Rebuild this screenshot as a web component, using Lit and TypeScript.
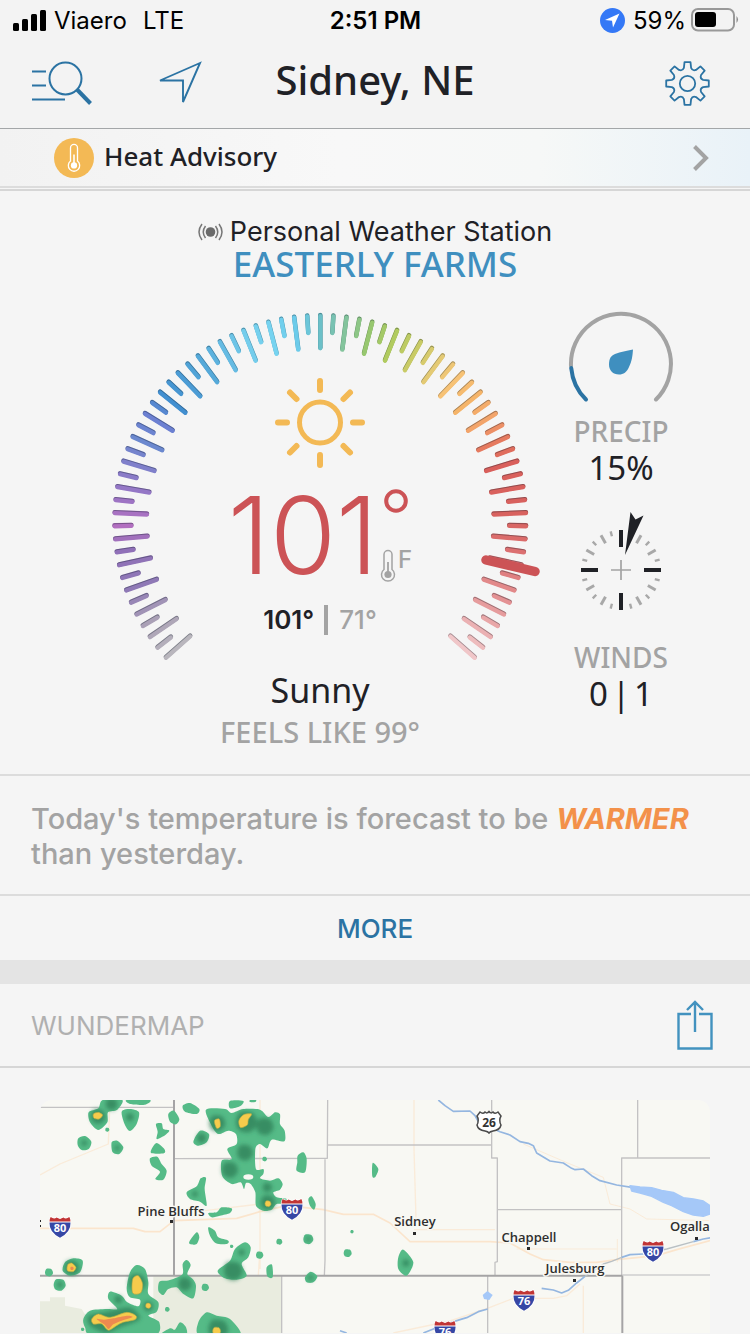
import { LitElement, html, css, svg } from "lit";
import { customElement } from "lit/decorators.js";

type Pt = [number, number];

/* ---------- dial ---------- */

const DIAL_STOPS: [number, string][] = [
  [-36, "#b9b6bd"], [-33, "#aaa0b6"], [-30, "#8f79b6"], [-27, "#9070b8"], [-25, "#b26fc0"],
  [-22, "#9477c6"], [-18, "#6b88cf"], [-16, "#6c80d2"], [-14, "#428fd0"], [-10, "#55a9d9"],
  [-6, "#74cdec"], [-4, "#76d3f0"], [-2, "#6ccbea"], [0, "#6cc0c8"], [2, "#83c49c"],
  [4, "#97c76f"], [6, "#b1cb5f"], [8, "#c9cb66"], [10, "#e4ca74"], [12, "#f7c275"],
  [14, "#f5b469"], [16, "#f3a46a"], [18, "#e67a5f"], [20, "#d95f5b"], [24, "#d8625f"],
  [28, "#dd7577"], [32, "#e69c9d"], [36, "#f0c6c8"],
];

const channels = (c: string) => [1, 3, 5].map((i) => parseInt(c.slice(i, i + 2), 16));

function dialColor(i: number): string {
  let k = 0;
  while (k < DIAL_STOPS.length - 2 && DIAL_STOPS[k + 1][0] < i) k++;
  const [a, ca] = DIAL_STOPS[k];
  const [b, cb] = DIAL_STOPS[k + 1];
  const t = (i - a) / (b - a);
  const x = channels(ca);
  const y = channels(cb);
  return `rgb(${x.map((v, n) => Math.round(v + (y[n] - v) * t)).join(",")})`;
}

function dialTick(i: number) {
  const a = (i * 3.65 * Math.PI) / 180;
  const outer = 205.8;
  const inner = i % 2 === 0 ? 173.5 : 189;
  const x1 = 225.3 + Math.sin(a) * outer;
  const y1 = 222.3 - Math.cos(a) * outer;
  const x2 = 225.3 + Math.sin(a) * inner;
  const y2 = 222.3 - Math.cos(a) * inner;
  const c = dialColor(i);
  return svg`
    <line x1=${x1} y1=${y1 - 0.4} x2=${x2} y2=${y2 - 0.4} stroke=${c} stroke-width="4.6" />
    <line x1=${x1} y1=${y1 - 0.4} x2=${x2} y2=${y2 - 0.4} stroke="#14202c" stroke-opacity="0.36" stroke-width="4.4" />
    <line x1=${x1} y1=${y1 + 0.5} x2=${x2} y2=${y2 + 0.5} stroke=${c} stroke-width="4.2" />`;
}

/* ---------- map helpers ---------- */

function smooth(p: Pt[]): string {
  const n = p.length;
  let d = `M${p[0][0]} ${p[0][1]}`;
  for (let i = 0; i < n; i++) {
    const a = p[(i - 1 + n) % n], b = p[i], c = p[(i + 1) % n], e = p[(i + 2) % n];
    d += `C${b[0] + (c[0] - a[0]) / 7} ${b[1] + (c[1] - a[1]) / 7} ${c[0] - (e[0] - b[0]) / 7} ${c[1] - (e[1] - b[1]) / 7} ${c[0]} ${c[1]}`;
  }
  return d + "Z";
}

const dot = (x: number, y: number, r: number): Pt[] => [
  [x - r, y], [x - r * 0.6, y - r * 0.9], [x + r * 0.6, y - r * 0.8], [x + r, y + r * 0.2], [x + r * 0.3, y + r], [x - r * 0.7, y + r * 0.8],
];

const RAIN: Pt[][] = [
  [[218, 33], [277, 33], [262, 62], [234, 70], [232, 100], [205, 123], [180, 100], [176, 70], [205, 58]],
  [[290, 33], [360, 33], [345, 47], [300, 45]],
  [[275, 68], [300, 60], [327, 70], [320, 105], [300, 126], [285, 108]],
  [[145, 148], [165, 141], [184, 158], [176, 180], [155, 183], [143, 168]],
  [[245, 160], [262, 155], [280, 175], [268, 195], [248, 190]],
  [[378, 105], [395, 103], [400, 120], [418, 125], [400, 142], [380, 150], [383, 128]],
  [[365, 180], [380, 162], [403, 180], [402, 193], [365, 193]],
  [[360, 208], [382, 203], [395, 225], [410, 245], [400, 272], [376, 270], [390, 248], [365, 230]],
  [[415, 75], [432, 65], [448, 90], [438, 106], [420, 98]],
  [[458, 50], [480, 42], [508, 60], [500, 75], [465, 68]],
  [[600, 36], [640, 36], [630, 52], [600, 58]],
  [[660, 33], [678, 33], [676, 39], [660, 39]],
  [[528, 62], [585, 60], [605, 72], [640, 60], [690, 62], [715, 84], [735, 70], [750, 76], [750, 105], [764, 125], [763, 157], [725, 152], [712, 178], [690, 165], [676, 180], [678, 240], [700, 240], [700, 255], [690, 268], [720, 275], [745, 268], [758, 285], [750, 302], [730, 310], [740, 325], [770, 330], [770, 345], [740, 345], [725, 362], [700, 365], [678, 350], [676, 310], [662, 285], [648, 282], [642, 300], [632, 280], [605, 285], [577, 262], [575, 215], [605, 210], [592, 180], [620, 165], [618, 135], [595, 125], [565, 135], [545, 110]],
  [[490, 158], [510, 125], [537, 135], [530, 160], [505, 170]],
  [[470, 310], [500, 292], [512, 268], [528, 266], [524, 300], [530, 350], [510, 338], [480, 330]],
  [[535, 372], [560, 370], [575, 355], [605, 358], [600, 372], [570, 380], [545, 385]],
  [[535, 415], [555, 425], [565, 445], [595, 455], [590, 465], [558, 463], [540, 440]],
  [[478, 458], [500, 430], [508, 445], [500, 465], [482, 466]],
  [[563, 545], [600, 515], [615, 480], [645, 460], [662, 475], [655, 505], [635, 525], [650, 560], [620, 572], [585, 568]],
  [[458, 525], [470, 513], [482, 528], [472, 555], [488, 570], [498, 590], [490, 628], [460, 615], [440, 595], [415, 600], [400, 618], [385, 605], [388, 578], [410, 575], [430, 570], [458, 555]],
  [[105, 520], [130, 508], [158, 515], [150, 550], [120, 560], [98, 545]],
  [[300, 550], [320, 528], [345, 540], [355, 580], [355, 615], [385, 640], [380, 668], [355, 680], [388, 700], [370, 740], [190, 740], [165, 715], [160, 690], [180, 665], [230, 660], [262, 660], [235, 630], [240, 608], [275, 620], [292, 640], [325, 652], [330, 632], [300, 625], [290, 600]],
  [[505, 700], [530, 670], [560, 680], [600, 690], [630, 740], [510, 740]],
  [[390, 740], [420, 718], [435, 722], [450, 700], [468, 715], [465, 740]],
  [[803, 200], [820, 190], [830, 210], [825, 250], [800, 245], [802, 220]],
  [[1028, 222], [1045, 240], [1036, 264], [1027, 262]],
  [[835, 330], [845, 322], [857, 345], [852, 362], [840, 350]],
  [[710, 535], [726, 527], [728, 565], [712, 562]],
  [[825, 565], [842, 548], [862, 562], [850, 580], [830, 580]],
  [[1120, 482], [1150, 520], [1130, 560], [1105, 540], [1105, 505]],
  dot(605, 472, 5), dot(526, 595, 11), dot(57, 550, 12), dot(89, 587, 18), dot(412, 661, 7), dot(232, 122, 6),
  dot(835, 450, 15), dot(748, 458, 9), dot(966, 428, 5), dot(953, 492, 12), dot(689, 498, 11), dot(704, 210, 7), dot(158, 721, 5),
];

const HEAVY: Pt[][] = [
  dot(205, 82, 22), dot(245, 45, 18), dot(300, 84, 12), dot(163, 162, 9), dot(262, 177, 8), dot(562, 102, 24),
  dot(650, 98, 32), dot(705, 112, 26), dot(600, 242, 24), dot(645, 190, 24), dot(714, 340, 22), dot(712, 295, 14), dot(515, 147, 14), dot(495, 315, 9),
  dot(610, 545, 28), dot(635, 490, 10), dot(465, 585, 20), dot(90, 587, 9), dot(126, 536, 22), dot(322, 580, 26),
  dot(1128, 522, 11), dot(842, 566, 8), dot(835, 450, 7), dot(565, 720, 30), dot(355, 652, 15), dot(265, 632, 12),
  [[175, 680], [230, 668], [300, 655], [330, 690], [270, 715], [230, 732], [180, 710]],
];

const YELLOW: Pt[][] = [
  [[190, 75], [205, 70], [218, 78], [208, 90], [192, 88]],
  [[553, 95], [568, 90], [571, 112], [560, 118]],
  [[630, 88], [643, 76], [665, 75], [655, 92], [652, 108], [632, 116], [626, 100]],
  dot(714, 344, 9),
  [[113, 527], [125, 522], [138, 535], [130, 548], [112, 545]],
  [[308, 570], [325, 560], [338, 585], [332, 612], [308, 612]],
  [[185, 690], [205, 675], [240, 685], [290, 670], [318, 680], [315, 692], [280, 700], [260, 710], [235, 724], [215, 705], [190, 705]],
  dot(355, 650, 8), dot(560, 726, 12),
];

const SEVERE: Pt[][] = [
  [[200, 690], [222, 692], [250, 688], [290, 680], [308, 684], [275, 695], [250, 706], [236, 720], [222, 706]],
  dot(126, 538, 5),
];

function interstate(x: number, y: number, n: string) {
  return svg`
    <g transform="translate(${x} ${y})">
      <path d="M-9.500 -11 Q-6 -8 -3.500 -10.500 L0 -8.800 L3.500 -10.500 Q6 -8 9.500 -11 Q12 -7 11 -3 L11 0 Q9.500 7 0 11.500 Q-9.500 7 -11 0 L-11 -3 Q-12 -7 -9.500 -11Z" fill="#fff" />
      <path d="M-9.300 -10 Q-6 -7.500 -3.500 -9.500 L0 -8 L3.500 -9.500 Q6 -7.500 9.300 -10 Q10.800 -7.500 10.500 -5.500 L-10.500 -5.500 Q-10.800 -7.500 -9.300 -10Z" fill="#c13535" />
      <path d="M-10.500 -4.500 H10.500 Q11 5 0 10.800 Q-11 5 -10.500 -4.500Z" fill="#3647a5" />
      <text x="0" y="5" class="shield">${n}</text>
    </g>`;
}

const map = svg`
  <svg class="map" viewBox="0 0 670 233" role="img" aria-label="Radar map around Sidney, Nebraska">
    <defs><filter id="soft" x="-5%" y="-5%" width="110%" height="110%"><feGaussianBlur stdDeviation="6" /></filter></defs>
    <rect width="670" height="233" fill="#f8f8f3" />
    <g transform="translate(-10 -11) scale(0.33333)" fill="none" stroke-linejoin="round">
      <path d="M370 560H755V740H370Z M30 637H60V625H105V650L155 660L205 740H30Z" fill="#e9ecdf" />
      <g stroke="#fbe5cd" stroke-width="5">
        <path d="M30 418H310L345 428H390L432 395L620 388L690 368L770 350L880 362L940 376H1030L1080 402L1140 458H1380L1440 462L1500 495L1540 512L1620 520L1700 520L1760 512L1880 500L1940 482L2050 452" />
        <path d="M30 258L90 225L235 165L240 33M525 365L690 345M690 33V540M685 560L690 480M1152 33V180L1158 390M1152 422H1395M1260 696L1380 655L1450 628H1570L1610 620L1650 585M1090 732L1260 696M1660 590V732" stroke-width="4" opacity="0.7" />
        <path d="M1480 165L1620 225L1720 265L1740 345L1800 360L1850 390L2050 395M1762 450V520M1460 480H1760" stroke-width="3" opacity="0.7" />
      </g>
      <path d="M30 55H432M432 209L892 208M893 33L892 208L885 208V515L883 560M893 168H1385M1385 33V207H1402V518L1395 520V558M1402 362H1775M1775 558V207H2050M1823 33V207M755 560V740M1373 560V740" stroke="#c3c2c3" stroke-width="4" />
      <path d="M432 33V560M30 560H1777V740" stroke="#a5a4a5" stroke-width="6" />
      <path d="M1777 558H2050" stroke="#cfcfcf" stroke-width="4" />
      <g stroke="#94b6e0" stroke-width="5">
        <path d="M1225 33L1245 50L1270 67L1320 66L1335 80L1345 98L1370 110L1410 128L1440 138L1470 158L1495 163L1510 170L1520 192L1560 216L1600 222L1625 238L1635 242L1660 240L1685 260L1710 275L1760 288L1810 296" />
        <path d="M1535 598L1570 603L1595 612L1615 604L1640 582L1665 562M1775 505L1800 497L1840 495M1990 458L2020 450L2050 445M1180 732L1240 708L1290 692L1310 686L1345 668L1373 660M930 725L950 732" />
        <path d="M1665 562L1720 525L1745 517L1775 505M1840 495L1910 480L1990 458" stroke="#b9c0c4" stroke-width="4" />
      </g>
      <path d="M1800 290L1830 294L1865 296L1895 304L1930 310L1960 326L1990 330L2020 336L2040 350V375L2020 382L1990 378L1960 368L1925 350L1900 340L1865 322L1830 312L1805 306Z" fill="#a5c8f8" stroke="#a5c8f8" stroke-width="4" />
      <path d="M1358 618L1372 606L1388 618L1378 633L1362 630Z" fill="#a5c8f8" />
      <g fill="#55bb87">${RAIN.map((p) => svg`<path d=${smooth(p)} />`)}</g>
      <g fill="#2f7f55" fill-opacity="0.75" filter="url(#soft)">${HEAVY.map((p) => svg`<path d=${smooth(p)} />`)}</g>
      <ellipse cx="655" cy="264" rx="15" ry="8" fill="#f8f8f3" />
      <g fill="#f6cb4c" stroke="#a9a845" stroke-width="2">${YELLOW.map((p) => svg`<path d=${smooth(p)} />`)}</g>
      <g fill="#ee8a50">${SEVERE.map((p) => svg`<path d=${smooth(p)} />`)}</g>
    </g>
    ${interstate(20, 127, "80")} ${interstate(252, 109, "80")} ${interstate(613, 151, "80")}
    ${interstate(484, 200, "76")} ${interstate(405, 231, "76")}
    <g transform="translate(449 22)">
      <path d="M-9 -10 Q-6 -7.500 -4 -10 Q-2 -8 0 -10.500 Q2 -8 4 -10 Q6 -7.500 9 -10 L12 -6 Q9.500 -2 12 3 Q11 8 4 9 Q1 9.500 0 11 Q-1 9.500 -4 9 Q-11 8 -12 3 Q-9.500 -2 -12 -6Z" fill="#fff" stroke="#4a4a4a" stroke-width="1.500" />
      <text x="0" y="5" class="route">26</text>
    </g>
    <g fill="#2a2a2a">
      <rect x="0" y="120" width="1" height="2" /><rect x="0" y="125" width="1" height="2" />
      <rect x="130" y="120" width="3" height="3" /><rect x="373" y="132" width="3" height="3" />
      <rect x="487" y="147" width="3" height="3" /><rect x="533" y="179" width="3" height="3" /><rect x="655" y="137" width="3" height="3" />
    </g>
    <text x="131" y="116" class="town">Pine Bluffs</text>
    <text x="375" y="126" class="town">Sidney</text>
    <text x="489" y="142" class="town">Chappell</text>
    <text x="535" y="173" class="town">Julesburg</text>
    <text x="630" y="131" class="town cut">Ogallala</text>
  </svg>`;

/* ---------- icons ---------- */

const thermometer = (cls: string) => html`
  <svg class=${cls} viewBox="0 0 16 34" fill="none" stroke="currentColor" aria-hidden="true">
    <path d="M4 20.500V5.500a4 4 0 0 1 8 0V20.500a6.500 6.500 0 1 1-8 0Z" stroke-width="1.500" />
    <path d="M8 13V24" stroke-width="1.800" />
    <circle cx="8" cy="25.500" r="3.600" fill="currentColor" stroke="none" />
  </svg>`;

function gearPath(): string {
  const pts: string[] = [];
  const at = (deg: number, r: number) => {
    const a = (deg * Math.PI) / 180;
    return `${(22.5 + Math.sin(a) * r).toFixed(2)} ${(22.5 - Math.cos(a) * r).toFixed(2)}`;
  };
  for (let i = 0; i < 8; i++) {
    const m = i * 45;
    pts.push(`${i ? "L" : "M"}${at(m - 8, 21.5)}L${at(m + 8, 21.5)}L${at(m + 13, 16)}Q${at(m + 22.5, 13.2)} ${at(m + 32, 16)}`);
  }
  return pts.join("") + "Z";
}

const COMPASS = Array.from({ length: 24 }, (_, i) => i);

@customElement("app-root")
export class AppRoot extends LitElement {
  static styles = css`
    :host {
      display: block;
      height: 100vh;
      overflow: hidden;
      background: #f5f5f5;
      color: #1f2126;
      font-family: Inter, "Liberation Sans", sans-serif;
    }
    svg { display: block; flex: none; }
    button, a { margin: 0; padding: 0; border: 0; background: none; color: inherit; font: inherit; text-decoration: none; cursor: pointer; }
    h1, h2, p { margin: 0; font-weight: 400; }
    .brand { font-family: "Noto Sans", "Open Sans", sans-serif; }

    .status { display: grid; grid-template-columns: 1fr auto 1fr; align-items: center; height: 40px; padding: 0 11px 0 12px; background: #f3f3f3; color: #000; font-size: 24px; }
    .status-left, .status-right { display: flex; align-items: center; }
    .signal { margin-right: 8px; }
    .network { margin-left: 16px; }
    .clock { font-weight: 600; }
    .status-right { justify-content: flex-end; }
    .tracking { margin-right: 8px; }
    .battery { margin-left: 5px; }

    .header { display: grid; grid-template-columns: 1fr auto 1fr; align-items: center; height: 86px; padding: 0 32px 2px; border-bottom: 1px solid #a3a6a8; background: #f3f3f3; }
    .tools { display: flex; gap: 66px; color: #2b73a3; }
    .settings { justify-self: end; margin-right: 8px; color: #2b73a3; }
    .title { padding-bottom: 6px; font-size: 40px; font-weight: 500; line-height: 48px; }

    .alert { display: flex; align-items: center; height: 57px; padding: 0 41px 0 54px; border-bottom: 2px solid #dcdcdc; background: linear-gradient(90deg, #f2f2f2 0%, #f8f8f8 45%, #f6f8f7 72%, #e9f2f8 100%); }
    .alert-badge { display: grid; place-items: center; width: 40px; height: 40px; margin-right: 10px; border-radius: 50%; background: #f3b955; color: #fff; }
    .alert-thermo { width: 14px; height: 30px; }
    .alert-name { flex: 1; padding-bottom: 4px; font-size: 26px; font-weight: 500; line-height: 32px; }

    .current { margin-top: 1px; border-top: 2px solid #d6d6d6; border-bottom: 2px solid #dcdcdc; padding: 25px 0 26px; }
    .station { display: flex; justify-content: center; align-items: center; gap: 7px; font-size: 27px; line-height: 32px; }
    .station-name { display: block; color: #3f8fbf; font-size: 35px; font-weight: 500; line-height: 32px; text-align: center; }
    .conditions { display: flex; justify-content: space-between; padding: 19px 74px 0 95px; }
    .gauge { display: grid; width: 450px; }
    .dial, .readout { grid-area: 1 / 1; }
    .dial { width: 450px; height: 370px; }
    .readout { display: flex; flex-direction: column; align-items: center; padding-top: 79px; }
    .temperature { display: flex; height: 106px; margin-top: 14px; color: #cc5356; }
    .degrees { font-size: 107px; font-weight: 300; line-height: 106px; }
    .unit { display: flex; flex-direction: column; justify-content: space-between; padding: 7px 0 5px 2px; }
    .ring { width: 24px; height: 24px; margin-left: 4px; }
    .scale { display: flex; gap: 2px; color: #a3a3a3; font-size: 24px; font-weight: 500; line-height: 22px; }
    .scale-thermo { width: 16px; height: 34px; }
    .range { display: flex; align-items: center; gap: 10px; margin-top: 17px; font-size: 26px; font-weight: 600; line-height: 30px; }
    .low { padding-left: 11px; border-left: 4px solid #a3a3a3; color: #a3a3a3; font-weight: 500; }
    .sky { margin-top: 35px; font-size: 34px; line-height: 40px; }
    .feels { margin-top: 6px; color: #a3a3a3; font-size: 29px; font-weight: 500; line-height: 32px; }

    .side { display: flex; flex-direction: column; align-items: center; width: 110px; }
    .label { color: #a3a3a3; font-size: 28px; font-weight: 500; line-height: 32px; }
    .precip-icon { margin-top: 11px; margin-bottom: 9px; }
    .value { display: flex; gap: 4px; font-size: 33px; line-height: 42px; }
    .wind-icon { margin-top: 22px; margin-bottom: 30px; }

    .forecast { padding: 25px 31px 23px; border-bottom: 2px solid #dcdcdc; color: #a3a3a3; font-size: 29px; font-weight: 500; line-height: 35px; }
    .warmer { color: #f3914a; font-weight: 700; font-style: italic; }
    .more { display: block; width: 100%; height: 64px; color: #2b73a3; font-size: 26px; font-weight: 500; }

    .map-header { display: flex; align-items: center; justify-content: space-between; height: 82px; padding: 0 37px 0 31px; border-top: 24px solid #e4e4e4; border-bottom: 2px solid #d6d6d6; }
    .map-title { color: #b0b0b0; font-size: 26px; }
    .share { color: #4292bf; }
    .map-link { display: block; margin: 32px 40px 0; border-radius: 12px 12px 0 0; overflow: hidden; }
    .map { width: 100%; }
    .town { fill: #2e2e2e; stroke: #f8f8f3; stroke-width: 3px; paint-order: stroke; font-family: "Open Sans", "Noto Sans", sans-serif; font-size: 13px; font-weight: 600; text-anchor: middle; }
    .cut { text-anchor: start; }
    .shield { fill: #fff; font-family: "Open Sans", sans-serif; font-size: 11px; font-weight: 700; text-anchor: middle; }
    .route { fill: #333; font-family: "Open Sans", sans-serif; font-size: 12px; font-weight: 700; text-anchor: middle; }
  `;

  render() {
    return html`
      <div class="status">
        <div class="status-left">
          <svg class="signal" width="34" height="22" viewBox="0 0 34 22" aria-hidden="true">
            <rect x="1" y="14" width="6" height="8" rx="1.500" /><rect x="10" y="10" width="6" height="12" rx="1.500" />
            <rect x="19" y="5" width="6" height="17" rx="1.500" /><rect x="28" y="1" width="6" height="21" rx="1.500" />
          </svg>
          <span>Viaero</span><span class="network">LTE</span>
        </div>
        <div class="clock">2:51 PM</div>
        <div class="status-right">
          <svg class="tracking" width="25" height="25" viewBox="0 0 25 25" aria-hidden="true">
            <circle cx="12.500" cy="12.500" r="12.500" fill="#3478f6" /><path d="M19.500 5.500L13 19.500L12 12.800L5 12Z" fill="#fff" />
          </svg>
          <span>59%</span>
          <svg class="battery" width="48" height="24" viewBox="0 0 48 24" aria-hidden="true">
            <rect x="1" y="1" width="42" height="21.500" rx="6" fill="none" stroke="#999" stroke-width="2" />
            <rect x="4" y="4" width="21" height="15" rx="3" /><path d="M45.500 8q3 3.500 0 7Z" fill="#888" />
          </svg>
        </div>
      </div>

      <header class="header">
        <div class="tools">
          <button aria-label="Search">
            <svg width="60" height="44" viewBox="0 0 60 44" fill="none" stroke="currentColor" aria-hidden="true">
              <circle cx="33.500" cy="17.500" r="16" stroke-width="2" /><path d="M0 10.500H14M0 24.500H14M0 38.500H33" stroke-width="2" /><path d="M45 28.500L58.500 42.500" stroke-width="4" />
            </svg>
          </button>
          <button aria-label="My location">
            <svg width="44" height="44" viewBox="0 0 44 44" fill="none" stroke="currentColor" aria-hidden="true">
              <path d="M42 2L2 19.500H25V41Z" stroke-width="1.900" />
            </svg>
          </button>
        </div>
        <h1 class="title brand">Sidney, NE</h1>
        <button class="settings" aria-label="Settings">
          <svg width="45" height="45" viewBox="0 0 45 45" fill="none" stroke="currentColor" stroke-width="1.800" stroke-linejoin="round" aria-hidden="true">
            <path d=${gearPath()} /><circle cx="22.500" cy="22.500" r="7.700" />
          </svg>
        </button>
      </header>

      <a class="alert" href="#alerts">
        <span class="alert-badge">${thermometer("alert-thermo")}</span>
        <span class="alert-name brand">Heat Advisory</span>
        <svg width="16" height="26" viewBox="0 0 16 26" fill="none" stroke="#a3a3a3" stroke-width="4" aria-hidden="true"><path d="M1.500 1.500L13 13L1.500 24.500" /></svg>
      </a>

      <section class="current">
        <div class="station">
          <svg width="25" height="20" viewBox="0 0 25 20" fill="none" stroke="#777" stroke-width="1.500" aria-hidden="true">
            <circle cx="12.500" cy="10" r="4.800" fill="#6b6b6b" stroke="none" />
            <path d="M4 2q-6 8 0 16M21 2q6 8 0 16M7.500 4q-4.500 6 0 12M17.500 4q4.500 6 0 12" />
          </svg>
          <span>Personal Weather Station</span>
        </div>
        <a class="station-name brand" href="#station">EASTERLY FARMS</a>

        <div class="conditions">
          <div class="gauge">
            <svg class="dial" viewBox="0 0 450 370" stroke-linecap="round" aria-hidden="true">
              ${Array.from({ length: 73 }, (_, k) => dialTick(k - 36))}
              <path d="M391 261L440 272.500" stroke="#cc5356" stroke-width="9.500" />
            </svg>
            <div class="readout">
              <svg width="90" height="90" viewBox="0 0 90 90" fill="none" stroke="#f3b955" aria-hidden="true">
                <circle cx="45" cy="44.500" r="20.500" stroke-width="5" />
                <path d="M45 3V12M45 77V87M3 44.500H12M78 44.500H87M15 14.500L21.500 21M68.500 68L75 74.500M15 74.500L21.500 68M68.500 21L75 14.500" stroke-width="6" stroke-linecap="round" />
              </svg>
              <div class="temperature">
                <span class="degrees">101</span>
                <div class="unit">
                  <svg class="ring" viewBox="0 0 24 24" fill="none" stroke="currentColor" stroke-width="4" role="img" aria-label="degrees"><circle cx="12" cy="12" r="9.800" /></svg>
                  <div class="scale">${thermometer("scale-thermo")}<span>F</span></div>
                </div>
              </div>
              <div class="range"><span>101°</span><span class="low">71°</span></div>
              <div class="sky brand">Sunny</div>
              <div class="feels brand">FEELS LIKE 99°</div>
            </div>
          </div>

          <div class="side">
            <svg class="precip-icon" width="106" height="96" viewBox="0 0 106 96" fill="none" stroke-width="4" stroke-linecap="round" aria-hidden="true">
              <path d="M3 56A50 50 0 1 1 88 89.500" stroke="#a3a3a3" /><path d="M3.200 58Q5 77 18 89.500" stroke="#2b73a3" />
              <path d="M65 39.500C64.500 46 64 51 61 57C59 62 55.500 64.500 51 64.500C45 64.500 41 60.500 41 54.500C41 48.500 43 45.500 47 44C53 41.500 58 41 65 39.500Z" fill="#3f8fbf" />
            </svg>
            <div class="label brand">PRECIP</div>
            <div class="value brand">15%</div>
            <svg class="wind-icon" width="90" height="100" viewBox="-45 -59 90 100" fill="none" aria-hidden="true">
              ${COMPASS.map((i) => {
                const major = i % 6 === 0;
                const mid = i % 2 === 0;
                return svg`<path d="M0 ${major ? -23 : mid ? -31 : -35}V-40" transform="rotate(${i * 15})" stroke=${major ? "#1f2126" : "#a8a8a8"} stroke-width=${major ? 4 : mid ? 3 : 2.4} />`;
              })}
              <path d="M-10 0H10M0 -10V10" stroke="#a3a3a3" stroke-width="1.700" />
              <path d="M4 -15L9.500 -58L14.500 -50.500L22.500 -54.500Z" fill="#1f2126" />
            </svg>
            <div class="label brand">WINDS</div>
            <div class="value brand"><span>0</span><span>|</span><span>1</span></div>
          </div>
        </div>
      </section>

      <p class="forecast">Today's temperature is forecast to be <em class="warmer">WARMER</em> than yesterday.</p>
      <button class="more">MORE</button>

      <section>
        <div class="map-header">
          <h2 class="map-title">WUNDERMAP</h2>
          <button class="share" aria-label="Share">
            <svg width="36" height="50" viewBox="0 0 36 50" fill="none" stroke="currentColor" stroke-width="2.400" aria-hidden="true">
              <path d="M14 14H1.500V48.500H34.500V14H22M18 32V2M10 10L18 2L26 10" />
            </svg>
          </button>
        </div>
        <a class="map-link" href="#wundermap">${map}</a>
      </section>`;
  }
}
